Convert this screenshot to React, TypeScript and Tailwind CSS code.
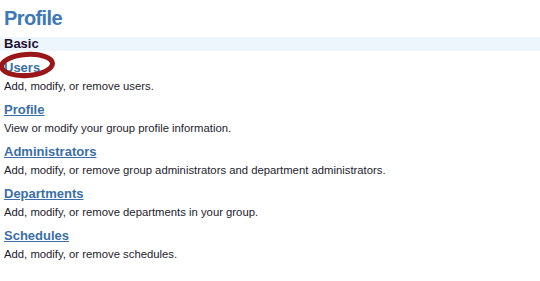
import React from "react";

const items = [
  { t: "Users", d: "Add, modify, or remove users." },
  { t: "Profile", d: "View or modify your group profile information." },
  { t: "Administrators", d: "Add, modify, or remove group administrators and department administrators." },
  { t: "Departments", d: "Add, modify, or remove departments in your group." },
  { t: "Schedules", d: "Add, modify, or remove schedules." },
];

export default function App() {
  return (
    <div className="w-[540px] h-[281px] bg-white overflow-hidden" style={{ fontFamily: '"Liberation Sans", Arial, sans-serif' }}>
      <h1 className="text-[20px] tracking-[-0.6px] font-bold text-[#3d78b8] leading-none pl-[4px] pt-[8px]">Profile</h1>
      <div className="mt-[9px] h-[14px] bg-[#eef6fd] pl-[4px] text-[13px] leading-[14px] font-bold text-[#1c0d2e]">Basic</div>
      <div className="flex flex-col pt-[4px]">
        {items.map((it, i) => (
          <div key={i} className="h-[42px] pl-[4px]">
            <div className="relative inline-block">
              <a href="#" className="text-[13px] leading-[16px] font-bold text-[#3a6ea8] underline">{it.t}</a>
              {i === 0 && (
                <svg className="absolute left-[-4px] top-[-6px] overflow-visible" width="60" height="32" viewBox="0 0 60 32">
                  <ellipse cx="27" cy="16" rx="25.5" ry="10.5" fill="none" stroke="#9a1619" strokeWidth="5" transform="rotate(-4 27 16)" />
                </svg>
              )}
            </div>
            <div className="text-[11.3px] leading-[13px] text-[#241c2c] mt-[1px]">{it.d}</div>
          </div>
        ))}
      </div>
    </div>
  );
}
